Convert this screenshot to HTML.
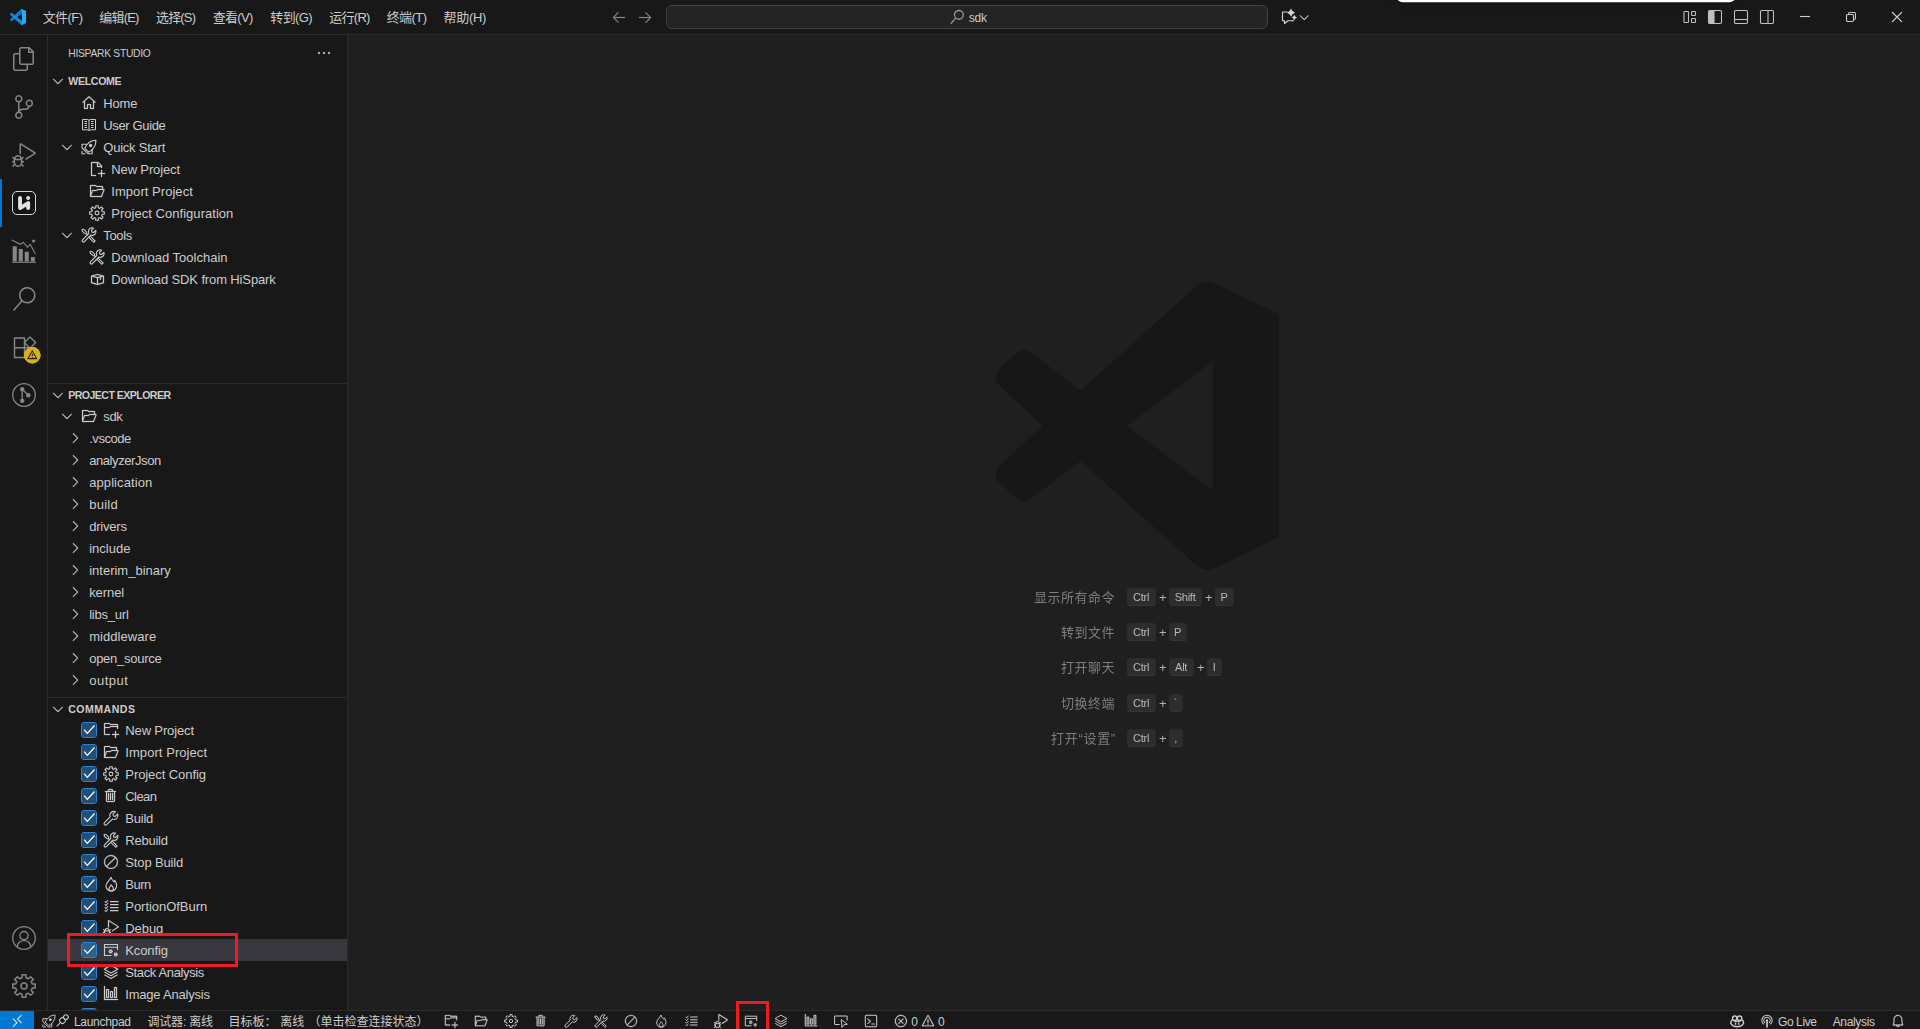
<!DOCTYPE html>
<html lang="zh-CN"><head><meta charset="utf-8"><title>sdk - Visual Studio Code</title><style>
html,body{margin:0;padding:0;background:#1f1f1f;}
body{width:1920px;height:1029px;position:relative;overflow:hidden;font-family:"Liberation Sans","Noto Sans CJK SC",sans-serif;}
.r{position:absolute;}
.t{position:absolute;white-space:pre;}
.g{will-change:transform;}
.ic{position:absolute;fill:none;stroke:currentColor;stroke-width:1.1;overflow:visible;}
.cb{position:absolute;width:16px;height:16px;box-sizing:border-box;border:1px solid #2a85d4;border-radius:3px;background:rgba(40,135,220,.5);background-clip:padding-box;}
.cb svg{position:absolute;left:0;top:0;}
.k{will-change:transform;position:absolute;height:18px;box-sizing:border-box;background:#2d2d2d;border:1px solid #2b2b2b;border-bottom-color:#363636;border-radius:3px;color:#b9b9b9;font-size:11px;line-height:16px;letter-spacing:-0.25px;text-indent:-0.5px;text-align:center;white-space:pre;}
</style></head><body>
<div class="r" style="left:0px;top:0px;width:1920px;height:1029px;background:#1f1f1f;"></div>
<div class="r" style="left:0px;top:0px;width:1920px;height:35px;background:#181818;border-bottom:1px solid #2b2b2b;box-sizing:border-box"></div>
<div class="r" style="left:0px;top:35px;width:48px;height:975px;background:#181818;border-right:1px solid #2b2b2b;box-sizing:border-box"></div>
<div class="r" style="left:48px;top:35px;width:300px;height:975px;background:#181818;border-right:1px solid #2b2b2b;box-sizing:border-box"></div>
<svg class="ic" style="left:10px;top:9px" width="16" height="16" viewBox="0 0 100 100"><g stroke="none"><path fill="#0c7ccb" d="M96.4614 10.7962L75.8569 0.875542C73.4719 -0.272773 70.6217 0.211611 68.75 2.08333L1.29858 63.5832C-0.515693 65.2373 -0.513607 68.0937 1.30308 69.7452L6.81272 74.7539C8.29793 76.1041 10.5347 76.2035 12.1338 74.9905L93.3609 13.3699C96.086 11.3026 100 13.2462 100 16.6667V16.4275C100 14.0265 98.6246 11.8378 96.4614 10.7962Z"/><path fill="#0d8ad9" d="M96.4614 89.2038L75.8569 99.1245C73.4719 100.273 70.6217 99.7884 68.75 97.9167L1.29858 36.4169C-0.515693 34.7627 -0.513607 31.9063 1.30308 30.2548L6.81272 25.2461C8.29793 23.8959 10.5347 23.7965 12.1338 25.0095L93.3609 86.6301C96.086 88.6974 100 86.7538 100 83.3334V83.5726C100 85.9735 98.6246 88.1622 96.4614 89.2038Z"/><path fill="#29a9f4" d="M75.8578 99.1263C73.4721 100.274 70.6219 99.7885 68.75 97.9166C71.0564 100.223 75 98.5895 75 95.3278V4.67213C75 1.41039 71.0564 -0.223106 68.75 2.08329C70.6219 0.211402 73.4721 -0.273666 75.8578 0.873633L96.4587 10.7807C98.6234 11.8217 100 14.0112 100 16.4132V83.5871C100 85.9891 98.6234 88.1786 96.4586 89.2196L75.8578 99.1263Z"/></g></svg>
<div class="t " style="left:42.7px;top:-0.5px;font-size:13px;line-height:35px;color:#cccccc;letter-spacing:-0.575px;">文件(F)</div>
<div class="t " style="left:99.3px;top:-0.5px;font-size:13px;line-height:35px;color:#cccccc;letter-spacing:-0.832px;">编辑(E)</div>
<div class="t " style="left:156px;top:-0.5px;font-size:13px;line-height:35px;color:#cccccc;letter-spacing:-0.832px;">选择(S)</div>
<div class="t " style="left:212.7px;top:-0.5px;font-size:13px;line-height:35px;color:#cccccc;letter-spacing:-0.682px;">查看(V)</div>
<div class="t " style="left:270.3px;top:-0.5px;font-size:13px;line-height:35px;color:#cccccc;letter-spacing:-0.593px;">转到(G)</div>
<div class="t " style="left:329.3px;top:-0.5px;font-size:13px;line-height:35px;color:#cccccc;letter-spacing:-0.737px;">运行(R)</div>
<div class="t " style="left:386.7px;top:-0.5px;font-size:13px;line-height:35px;color:#cccccc;letter-spacing:-0.575px;">终端(T)</div>
<div class="t " style="left:443.6px;top:-0.5px;font-size:13px;line-height:35px;color:#cccccc;letter-spacing:-0.337px;">帮助(H)</div>
<svg class="ic" style="left:610.7px;top:8.5px;color:#858585" width="16" height="16" viewBox="0 0 16 16"><path fill="currentColor" stroke="currentColor" stroke-width="0.25" fill-rule="evenodd" d="M7 3.093l-5 5V8.800l5 5 .707-.707-4.146-4.147H14v-1H3.560L7.708 3.800 7 3.093z"/></svg>
<svg class="ic" style="left:636.7px;top:8.5px;color:#858585" width="16" height="16" viewBox="0 0 16 16"><path fill="currentColor" stroke="currentColor" stroke-width="0.25" fill-rule="evenodd" d="M9 13.887l5-5V8.180l-5-5-.707.707 4.146 4.147H2v1h10.440L8.292 13.180l.707.707z"/></svg>
<div class="r" style="left:666px;top:5px;width:602px;height:24px;box-sizing:border-box;background:#242424;border:1px solid #414141;border-radius:6px"></div>
<svg class="ic" style="left:949.8px;top:10px;color:#b4b4b4" width="14" height="14" viewBox="0 0 24 24"><path fill="currentColor" stroke="currentColor" stroke-width="0.375" fill-rule="evenodd" d="M15.250 0a8.250 8.250 0 0 0-6.180 13.720L1 22.880l1.120 1 8.050-9.120A8.251 8.251 0 1 0 15.250.010V0zm0 15a6.750 6.750 0 1 1 0-13.500 6.750 6.750 0 0 1 0 13.500z"/></svg>
<div class="t " style="left:968.7px;top:5.8px;font-size:12px;line-height:24px;color:#cccccc;letter-spacing:-0.187px;">sdk</div>
<svg class="ic" style="left:1281px;top:9px;color:#d4d4d4" width="16" height="16" viewBox="0 0 16 16"><path d="M6.500 3H1.500v8.700h2v2.800l3.500-2.800h5.300V10.800" stroke-width="1.150" stroke-linejoin="round"/><path d="M10.00 -0.40Q10.90 2.80 14.10 3.70Q10.90 4.60 10.00 7.80Q9.10 4.60 5.90 3.70Q9.10 2.80 10.00 -0.40zM13.30 5.70Q13.92 7.88 16.10 8.50Q13.92 9.12 13.30 11.30Q12.68 9.12 10.50 8.50Q12.68 7.88 13.30 5.70z" fill="currentColor" stroke="none"/></svg>
<svg class="ic" style="left:1297.4px;top:9.9px;color:#ccc" width="14.4" height="14.4" viewBox="0 0 16 16"><path fill="currentColor" stroke="currentColor" stroke-width="0.25" fill-rule="evenodd" d="M7.976 10.072l4.357-4.357.62.618L8.284 11h-.618L3 6.333l.619-.618 4.357 4.357z"/></svg>
<svg class="ic" style="left:1681.5px;top:9px;color:#c0c0c0" width="16" height="16" viewBox="0 0 16 16"><rect x="2" y="2.500" width="4.500" height="11" rx=".8"/><rect x="9.500" y="2.500" width="4" height="4" rx=".8"/><rect x="9.500" y="9.500" width="4" height="4" rx=".8"/></svg>
<svg class="ic" style="left:1707px;top:9px;color:#c0c0c0" width="16" height="16" viewBox="0 0 16 16"><rect x="1.500" y="1.500" width="13" height="13" rx="1.200"/><path d="M2 2h5v12H2z" fill="currentColor" stroke="none"/><path d="M7 1.500v13"/></svg>
<svg class="ic" style="left:1733px;top:9px;color:#c0c0c0" width="16" height="16" viewBox="0 0 16 16"><rect x="1.500" y="1.500" width="13" height="13" rx="1.200"/><path d="M1.500 10.500h13"/></svg>
<svg class="ic" style="left:1759px;top:9px;color:#c0c0c0" width="16" height="16" viewBox="0 0 16 16"><rect x="1.500" y="1.500" width="13" height="13" rx="1.200"/><path d="M9 1.500v13"/></svg>
<svg class="ic" style="left:1800px;top:11px;color:#ccc" width="10" height="12" viewBox="0 0 10 12"><path d="M0 5.500h10"/></svg>
<svg class="ic" style="left:1846px;top:12px;color:#ccc" width="10" height="10" viewBox="0 0 10 10"><rect x=".5" y="2.500" width="7" height="7" rx="1.200"/><path d="M2.500 2.500V1.700c0-.7.500-1.200 1.200-1.200h4.600c.7 0 1.200.5 1.200 1.200v4.600c0 .7-.5 1.200-1.200 1.200h-.8"/></svg>
<svg class="ic" style="left:1892px;top:12px;color:#ccc" width="10" height="10" viewBox="0 0 10 10"><path d="M0 0l10 10M10 0 0 10"/></svg>
<svg class="ic" style="left:1380px;top:0;filter:drop-shadow(0 0 3px rgba(0,0,0,.35))" width="370" height="12" viewBox="0 0 370 12"><rect x="16.600" y="-10" width="338.900" height="12.350" rx="6" fill="#fff" stroke="none"/></svg>
<div class="r" style="left:0px;top:179px;width:2px;height:48px;background:#0078d4;"></div>
<svg class="ic" style="left:12px;top:47px;color:#868686" width="24" height="24" viewBox="0 0 24 24"><path fill="currentColor" stroke="none" fill-rule="evenodd" d="M17.500 0h-9L7 1.500V6H2.500L1 7.500v15.070L2.500 24h12.070L16 22.570V18h4.700l1.300-1.430V4.500L17.500 0zm0 2.120l2.380 2.380H17.500V2.120zm-3 20.380h-12v-15H7v9.070L8.500 18h6v4.500zm6-6h-12v-15H16V6h4.500v10.500z"/></svg>
<svg class="ic" style="left:12px;top:95px;color:#868686" width="24" height="24" viewBox="0 0 24 24"><path fill="currentColor" stroke="none" fill-rule="evenodd" d="M21.007 8.222A3.738 3.738 0 0 0 15.045 5.200a3.737 3.737 0 0 0 1.156 6.583 2.988 2.988 0 0 1-2.668 1.670h-2.990a4.456 4.456 0 0 0-2.989 1.165V7.400a3.737 3.737 0 1 0-1.494 0v9.117a3.776 3.776 0 1 0 1.816.099 2.990 2.990 0 0 1 2.668-1.667h2.990a4.484 4.484 0 0 0 4.223-3.039 3.736 3.736 0 0 0 3.250-3.687zM4.565 3.738a2.242 2.242 0 1 1 4.484 0 2.242 2.242 0 0 1-4.484 0zm4.484 16.441a2.242 2.242 0 1 1-4.484 0 2.242 2.242 0 0 1 4.484 0zm8.221-9.715a2.242 2.242 0 1 1 0-4.485 2.242 2.242 0 0 1 0 4.485z"/></svg>
<svg class="ic" style="left:12px;top:143px;color:#868686" width="24" height="24" viewBox="0 0 24 24"><path fill="currentColor" stroke="none" fill-rule="evenodd" d="M10.940 13.500l-1.320 1.320a3.730 3.730 0 0 0-7.240 0L1.060 13.500 0 14.560l1.720 1.720-.220.220V18H0v1.500h1.500v.080c.077.489.214.966.410 1.420L0 22.940 1.060 24l1.650-1.650A4.308 4.308 0 0 0 6 24a4.310 4.310 0 0 0 3.290-1.650L10.940 24 12 22.940 10.090 21c.198-.464.336-.951.410-1.450v-.100H12V18h-1.500v-1.500l-.220-.220L12 14.560l-1.060-1.060zM6 13.500a2.250 2.250 0 0 1 2.250 2.250h-4.500A2.250 2.250 0 0 1 6 13.500zm3 6a3.330 3.330 0 0 1-3 3 3.330 3.330 0 0 1-3-3v-2.250h6v2.250zm14.760-9.900v1.260L13.500 17.370V15.600l8.500-5.370L9 2v9.460a5.070 5.070 0 0 0-1.500-.720V.630L8.640 0l15.120 9.600z"/></svg>
<div class="r" style="left:12px;top:191px;width:24px;height:24px;box-sizing:border-box;border:1px solid #d7d7d7;border-radius:5px;background:#141414"></div>
<svg class="ic" style="left:12px;top:191px" width="24" height="24" viewBox="0 0 24 24"><path d="M8.050 7v10.100l8.100-5.050v5.050" fill="none" stroke="#e2e2e2" stroke-width="3.900" stroke-linecap="round" stroke-linejoin="round"/><circle cx="16.150" cy="7" r="1.950" fill="#e2e2e2" stroke="none"/></svg>
<svg class="ic" style="left:12px;top:239px;color:#868686" width="24" height="24" viewBox="0 0 24 24"><path d="M0 23.300h24" stroke-width="1.100"/><path d="M.700 7.200h4.100v15.300H.700zM6.700 9.900h4.100v12.600H6.700zM12.700 12.700h4.100v9.800h-4.100zM18.800 17.900h4.100v4.600h-4.100z" fill="currentColor" stroke="none"/><path d="M-.200 1.100l8.300 4.200 3.200-1.900 4.200 4.700 2.800-2.800 5.100 9.700" stroke-width="1.100"/><circle cx="21.600" cy="2" r="1.600" fill="currentColor" stroke="none"/></svg>
<svg class="ic" style="left:12px;top:287px;color:#868686" width="24" height="24" viewBox="0 0 24 24"><path fill="currentColor" stroke="none" fill-rule="evenodd" d="M15.250 0a8.250 8.250 0 0 0-6.180 13.720L1 22.880l1.120 1 8.050-9.120A8.251 8.251 0 1 0 15.250.010V0zm0 15a6.750 6.750 0 1 1 0-13.500 6.750 6.750 0 0 1 0 13.500z"/></svg>
<svg class="ic" style="left:12px;top:335px;color:#868686" width="24" height="24" viewBox="0 0 24 24"><path d="M2.500 3h10v9.700h-10zM2.500 12.700h10v9.800h-10zM12.500 12.700h9.800v9.800h-9.800zM18 2l5.600 5.600-5.600 5.600-5.600-5.600z" stroke-width="1.400" stroke-linejoin="round"/></svg>
<svg class="ic" style="left:23.950px;top:346.650px" width="16.500" height="16.500" viewBox="0 0 17 17"><circle cx="8.500" cy="8.500" r="8.500" fill="#e2c08d" stroke="none"/><circle cx="8.500" cy="8.500" r="8.500" fill="#d9b10e" stroke="none"/><path d="M8.500 3.800 13 12H4z" fill="none" stroke="#222" stroke-width="1.100" stroke-linejoin="round"/><path d="M8.500 6.800v2.700M8.500 10.300v.9" stroke="#222" stroke-width="1"/></svg>
<svg class="ic" style="left:12px;top:383px;color:#868686" width="24" height="24" viewBox="0 0 24 24"><circle cx="12" cy="12" r="11.300" stroke-width="1.300"/><circle cx="10.200" cy="6.200" r="2.200" fill="currentColor" stroke="none"/><circle cx="10.200" cy="17.800" r="2.200" fill="currentColor" stroke="none"/><circle cx="16.300" cy="12.300" r="2.200" fill="currentColor" stroke="none"/><path d="M10.200 6.200v11.600M10.200 6.200l6.100 6.100" stroke-width="1.300"/></svg>
<svg class="ic" style="left:12px;top:926px;color:#868686" width="24" height="24" viewBox="0 0 24 24"><circle cx="12" cy="12" r="11.300" stroke-width="1.300"/><circle cx="12" cy="9.600" r="4.100" stroke-width="1.300"/><path d="M5.300 20.600c.500-3.900 3.400-5.900 6.700-5.900s6.200 2 6.700 5.900" stroke-width="1.300"/></svg>
<svg class="ic" style="left:12px;top:974px;color:#868686" width="24" height="24" viewBox="0 0 24 24"><path stroke-width="1.500" d="M10.02 3.73 10.04 0.77 13.96 0.77 13.98 3.73 16.44 4.75 18.56 2.67 21.33 5.44 19.25 7.56 20.27 10.02 23.23 10.04 23.23 13.96 20.27 13.98 19.25 16.44 21.33 18.56 18.56 21.33 16.44 19.25 13.98 20.27 13.96 23.23 10.04 23.23 10.02 20.27 7.56 19.25 5.44 21.33 2.67 18.56 4.75 16.44 3.73 13.98 0.77 13.96 0.77 10.04 3.73 10.02 4.75 7.56 2.67 5.44 5.44 2.67 7.56 4.75z" stroke-linejoin="round"/><circle stroke-width="1.500" cx="12" cy="12" r="3.0"/></svg>
<div class="t " style="left:68.3px;top:36.3px;font-size:10.3px;line-height:35px;color:#cccccc;letter-spacing:-0.287px;">HISPARK STUDIO</div>
<svg class="ic" style="left:316px;top:45px;color:#cccccc" width="16" height="16" viewBox="0 0 16 16"><path fill="currentColor" stroke="currentColor" stroke-width="0.25" fill-rule="evenodd" d="M4 8a1 1 0 1 1-2 0 1 1 0 0 1 2 0zm5 0a1 1 0 1 1-2 0 1 1 0 0 1 2 0zm5 0a1 1 0 1 1-2 0 1 1 0 0 1 2 0z"/></svg>
<svg class="ic" style="left:50px;top:73px;color:#cccccc" width="16" height="16" viewBox="0 0 16 16"><path fill="currentColor" stroke="currentColor" stroke-width="0.25" fill-rule="evenodd" d="M7.976 10.072l4.357-4.357.62.618L8.284 11h-.618L3 6.333l.619-.618 4.357 4.357z"/></svg>
<div class="t " style="left:68.2px;top:70.3px;font-size:10.6px;line-height:22px;color:#cccccc;font-weight:700;letter-spacing:-0.308px;">WELCOME</div>
<div class="r" style="left:48px;top:383px;width:299px;height:1px;background:#2b2b2b;"></div>
<svg class="ic" style="left:50px;top:387px;color:#cccccc" width="16" height="16" viewBox="0 0 16 16"><path fill="currentColor" stroke="currentColor" stroke-width="0.25" fill-rule="evenodd" d="M7.976 10.072l4.357-4.357.62.618L8.284 11h-.618L3 6.333l.619-.618 4.357 4.357z"/></svg>
<div class="t " style="left:68.2px;top:384.3px;font-size:10.6px;line-height:22px;color:#cccccc;font-weight:700;letter-spacing:-0.555px;">PROJECT EXPLORER</div>
<div class="r" style="left:48px;top:697px;width:299px;height:1px;background:#2b2b2b;"></div>
<svg class="ic" style="left:50px;top:701px;color:#cccccc" width="16" height="16" viewBox="0 0 16 16"><path fill="currentColor" stroke="currentColor" stroke-width="0.25" fill-rule="evenodd" d="M7.976 10.072l4.357-4.357.62.618L8.284 11h-.618L3 6.333l.619-.618 4.357 4.357z"/></svg>
<div class="t " style="left:68.2px;top:698.3px;font-size:10.6px;line-height:22px;color:#cccccc;font-weight:700;letter-spacing:0.458px;">COMMANDS</div>
<svg class="ic" style="left:81px;top:95px;color:#cccccc" width="16" height="16" viewBox="0 0 16 16"><path fill="currentColor" stroke="currentColor" stroke-width="0.25" fill-rule="evenodd" d="M8.360 1.370l6.360 5.800-.710.710L13 6.964v6.526l-.500.500h-3l-.500-.500v-3.500H7v3.500l-.500.500h-3l-.500-.500V6.972L2 7.880l-.710-.710 6.350-5.800h.720zM4 6.063v6.927h2v-3.500l.500-.500h3l.500.500v3.500h2V6.057L8 2.430 4 6.063z"/></svg>
<div class="t " style="left:103.3px;top:92.8px;font-size:13px;line-height:22px;color:#cccccc;letter-spacing:-0.159px;">Home</div>
<svg class="ic" style="left:81px;top:117px;color:#cccccc" width="16" height="16" viewBox="0 0 16 16"><path d="M1.500 2.500h5.300c.700 0 1.200.500 1.200 1.200 0-.700.500-1.200 1.200-1.200h5.300v10.300H9.200c-.700 0-1.200.400-1.200 1 0-.600-.500-1-1.200-1H1.500zM8 3.700v10.100M3.500 4.500h2.500M3.500 6.500h2.500M3.500 8.500h2.500M3.500 10.500h2.500M10 4.500h2.500M10 6.500h2.500M10 8.500h2.500M10 10.500h2.500" stroke-width="1"/></svg>
<div class="t " style="left:103.3px;top:114.8px;font-size:13px;line-height:22px;color:#cccccc;letter-spacing:-0.361px;">User Guide</div>
<svg class="ic" style="left:59px;top:139px;color:#cccccc" width="16" height="16" viewBox="0 0 16 16"><path fill="currentColor" stroke="currentColor" stroke-width="0.25" fill-rule="evenodd" d="M7.976 10.072l4.357-4.357.62.618L8.284 11h-.618L3 6.333l.619-.618 4.357 4.357z"/></svg>
<svg class="ic" style="left:81px;top:139px;color:#cccccc" width="16" height="16" viewBox="0 0 16 16"><path d="M15 1.300C10.200 1.300 6.200 4 3.700 9.200l4 4C12.600 10.500 15 6.500 15 1.300zM5.700 5.300H1V9l6 5.700h4.200v-4.200M1 12v2.700h3.300" stroke-linejoin="round"/><circle cx="9.600" cy="6.500" r="1.100" fill="currentColor"/></svg>
<div class="t " style="left:103.3px;top:136.8px;font-size:13px;line-height:22px;color:#cccccc;letter-spacing:-0.230px;">Quick Start</div>
<svg class="ic" style="left:89px;top:161px;color:#cccccc" width="16" height="16" viewBox="0 0 16 16"><path fill="currentColor" stroke="currentColor" stroke-width="0.25" fill-rule="evenodd" d="M9.5 1.1l3.400 3.500.1.400v2h-1V6H8V2H3v12h4v1H2.500l-.500-.500v-13l.500-.500h6.700l.300.100zM9 2v3h2.900L9 2zm4 14h-1v-3H9v-1h3V9h1v3h3v1h-3v3z"/></svg>
<div class="t " style="left:111.3px;top:158.8px;font-size:13px;line-height:22px;color:#cccccc;letter-spacing:-0.138px;">New Project</div>
<svg class="ic" style="left:89px;top:183px;color:#cccccc" width="16" height="16" viewBox="0 0 16 16"><path fill="currentColor" stroke="currentColor" stroke-width="0.25" fill-rule="evenodd" d="M1.500 14h11l.480-.370 2.630-7-.480-.630H14V3.500l-.500-.500H7.710l-.860-.850L6.500 2h-5l-.500.500v11l.500.500zM2 3h4.290l.860.850.350.150H13v2H8.500l-.350.150-.860.850H3.500l-.470.340-1 3.080L2 3zm10.130 10H2.190l1.670-5H7.500l.350-.150.860-.850h5.790l-2.370 6z"/></svg>
<div class="t " style="left:111.3px;top:180.8px;font-size:13px;line-height:22px;color:#cccccc;letter-spacing:0.045px;">Import Project</div>
<svg class="ic" style="left:89px;top:205px;color:#cccccc" width="16" height="16" viewBox="0 0 16 16"><path d="M6.74 2.75 6.73 0.71 9.27 0.71 9.26 2.75 10.82 3.40 12.26 1.95 14.05 3.74 12.60 5.18 13.25 6.74 15.29 6.73 15.29 9.27 13.25 9.26 12.60 10.82 14.05 12.26 12.26 14.05 10.82 12.60 9.26 13.25 9.27 15.29 6.73 15.29 6.74 13.25 5.18 12.60 3.74 14.05 1.95 12.26 3.40 10.82 2.75 9.26 0.71 9.27 0.71 6.73 2.75 6.74 3.40 5.18 1.95 3.74 3.74 1.95 5.18 3.40z" stroke-linejoin="round"/><circle cx="8" cy="8" r="1.9"/></svg>
<div class="t " style="left:111.3px;top:202.8px;font-size:13px;line-height:22px;color:#cccccc;letter-spacing:0.030px;">Project Configuration</div>
<svg class="ic" style="left:59px;top:227px;color:#cccccc" width="16" height="16" viewBox="0 0 16 16"><path fill="currentColor" stroke="currentColor" stroke-width="0.25" fill-rule="evenodd" d="M7.976 10.072l4.357-4.357.62.618L8.284 11h-.618L3 6.333l.619-.618 4.357 4.357z"/></svg>
<svg class="ic" style="left:81px;top:227px;color:#cccccc" width="16" height="16" viewBox="0 0 16 16"><path d="M11.2 .9a3.700 3.700 0 0 1 1.500.300L10.500 3.400l.400 1.700 1.700.400 2.200-2.200a3.700 3.700 0 0 1-4.900 4.700L3.400 14.700a1.300 1.300 0 0 1-1.900-1.900l6.300-6.500A3.700 3.700 0 0 1 11.200.900z" stroke-linejoin="round"/><ellipse cx="3.400" cy="4.600" rx="3" ry="1.250" transform="rotate(45 3.400 4.600)"/><path d="M9.300 9.200l4.800 4.800-1.300 1.300-4.700-4.700M5.600 6.800 7 8.200"/></svg>
<div class="t " style="left:103.3px;top:224.8px;font-size:13px;line-height:22px;color:#cccccc;letter-spacing:-0.362px;">Tools</div>
<svg class="ic" style="left:89px;top:249px;color:#cccccc" width="16" height="16" viewBox="0 0 16 16"><path d="M11.2 .9a3.700 3.700 0 0 1 1.500.300L10.500 3.400l.400 1.700 1.700.400 2.200-2.200a3.700 3.700 0 0 1-4.900 4.700L3.400 14.700a1.300 1.300 0 0 1-1.900-1.900l6.300-6.500A3.700 3.700 0 0 1 11.200.900z" stroke-linejoin="round"/><ellipse cx="3.400" cy="4.600" rx="3" ry="1.250" transform="rotate(45 3.400 4.600)"/><path d="M9.300 9.200l4.800 4.800-1.300 1.300-4.700-4.700M5.600 6.800 7 8.200"/></svg>
<div class="t " style="left:111.3px;top:246.8px;font-size:13px;line-height:22px;color:#cccccc;letter-spacing:0.005px;">Download Toolchain</div>
<svg class="ic" style="left:89px;top:271px;color:#cccccc" width="16" height="16" viewBox="0 0 16 16"><path fill="currentColor" stroke="currentColor" stroke-width="0.25" fill-rule="evenodd" d="M8.610 3l5.740 1.530L15 5v6.740l-.370.480-6.130 1.690-6.140-1.690-.360-.480V5l.610-.470L8.340 3h.270zm-.090 1l-4 1 .550.200 3.430.900 3-.810.950-.290-3.930-1zM3 11.360l5 1.370V7L3 5.660v5.700zM9 7v5.730l5-1.370V5.630l-2.020.553V8.750l-1 .260V6.450L9 7z"/></svg>
<div class="t " style="left:111.3px;top:268.8px;font-size:13px;line-height:22px;color:#cccccc;letter-spacing:-0.130px;">Download SDK from HiSpark</div>
<svg class="ic" style="left:59px;top:408px;color:#cccccc" width="16" height="16" viewBox="0 0 16 16"><path fill="currentColor" stroke="currentColor" stroke-width="0.25" fill-rule="evenodd" d="M7.976 10.072l4.357-4.357.62.618L8.284 11h-.618L3 6.333l.619-.618 4.357 4.357z"/></svg>
<svg class="ic" style="left:81px;top:408px;color:#cccccc" width="16" height="16" viewBox="0 0 16 16"><path fill="currentColor" stroke="currentColor" stroke-width="0.25" fill-rule="evenodd" d="M1.500 14h11l.480-.370 2.630-7-.480-.630H14V3.500l-.500-.500H7.710l-.860-.850L6.500 2h-5l-.500.500v11l.500.500zM2 3h4.290l.860.850.350.150H13v2H8.500l-.350.150-.860.850H3.500l-.470.340-1 3.080L2 3zm10.130 10H2.190l1.670-5H7.500l.350-.150.860-.850h5.790l-2.370 6z"/></svg>
<div class="t " style="left:103.3px;top:405.8px;font-size:13px;line-height:22px;color:#cccccc;letter-spacing:-0.365px;">sdk</div>
<svg class="ic" style="left:67px;top:430px;color:#cccccc" width="16" height="16" viewBox="0 0 16 16"><path fill="currentColor" stroke="currentColor" stroke-width="0.25" fill-rule="evenodd" d="M10.072 8.024L5.715 3.667l.618-.62L11 7.716v.618L6.333 13l-.618-.619 4.357-4.357z"/></svg>
<div class="t " style="left:89.2px;top:427.8px;font-size:13px;line-height:22px;color:#cccccc;letter-spacing:-0.450px;">.vscode</div>
<svg class="ic" style="left:67px;top:452px;color:#cccccc" width="16" height="16" viewBox="0 0 16 16"><path fill="currentColor" stroke="currentColor" stroke-width="0.25" fill-rule="evenodd" d="M10.072 8.024L5.715 3.667l.618-.62L11 7.716v.618L6.333 13l-.618-.619 4.357-4.357z"/></svg>
<div class="t " style="left:89.2px;top:449.8px;font-size:13px;line-height:22px;color:#cccccc;letter-spacing:-0.418px;">analyzerJson</div>
<svg class="ic" style="left:67px;top:474px;color:#cccccc" width="16" height="16" viewBox="0 0 16 16"><path fill="currentColor" stroke="currentColor" stroke-width="0.25" fill-rule="evenodd" d="M10.072 8.024L5.715 3.667l.618-.62L11 7.716v.618L6.333 13l-.618-.619 4.357-4.357z"/></svg>
<div class="t " style="left:89.2px;top:471.8px;font-size:13px;line-height:22px;color:#cccccc;letter-spacing:0.084px;">application</div>
<svg class="ic" style="left:67px;top:496px;color:#cccccc" width="16" height="16" viewBox="0 0 16 16"><path fill="currentColor" stroke="currentColor" stroke-width="0.25" fill-rule="evenodd" d="M10.072 8.024L5.715 3.667l.618-.62L11 7.716v.618L6.333 13l-.618-.619 4.357-4.357z"/></svg>
<div class="t " style="left:89.2px;top:493.8px;font-size:13px;line-height:22px;color:#cccccc;letter-spacing:0.258px;">build</div>
<svg class="ic" style="left:67px;top:518px;color:#cccccc" width="16" height="16" viewBox="0 0 16 16"><path fill="currentColor" stroke="currentColor" stroke-width="0.25" fill-rule="evenodd" d="M10.072 8.024L5.715 3.667l.618-.62L11 7.716v.618L6.333 13l-.618-.619 4.357-4.357z"/></svg>
<div class="t " style="left:89.2px;top:515.8px;font-size:13px;line-height:22px;color:#cccccc;letter-spacing:-0.201px;">drivers</div>
<svg class="ic" style="left:67px;top:540px;color:#cccccc" width="16" height="16" viewBox="0 0 16 16"><path fill="currentColor" stroke="currentColor" stroke-width="0.25" fill-rule="evenodd" d="M10.072 8.024L5.715 3.667l.618-.62L11 7.716v.618L6.333 13l-.618-.619 4.357-4.357z"/></svg>
<div class="t " style="left:89.2px;top:537.8px;font-size:13px;line-height:22px;color:#cccccc;letter-spacing:0.017px;">include</div>
<svg class="ic" style="left:67px;top:562px;color:#cccccc" width="16" height="16" viewBox="0 0 16 16"><path fill="currentColor" stroke="currentColor" stroke-width="0.25" fill-rule="evenodd" d="M10.072 8.024L5.715 3.667l.618-.62L11 7.716v.618L6.333 13l-.618-.619 4.357-4.357z"/></svg>
<div class="t " style="left:89.2px;top:559.8px;font-size:13px;line-height:22px;color:#cccccc;letter-spacing:-0.003px;">interim_binary</div>
<svg class="ic" style="left:67px;top:584px;color:#cccccc" width="16" height="16" viewBox="0 0 16 16"><path fill="currentColor" stroke="currentColor" stroke-width="0.25" fill-rule="evenodd" d="M10.072 8.024L5.715 3.667l.618-.62L11 7.716v.618L6.333 13l-.618-.619 4.357-4.357z"/></svg>
<div class="t " style="left:89.2px;top:581.8px;font-size:13px;line-height:22px;color:#cccccc;letter-spacing:-0.082px;">kernel</div>
<svg class="ic" style="left:67px;top:606px;color:#cccccc" width="16" height="16" viewBox="0 0 16 16"><path fill="currentColor" stroke="currentColor" stroke-width="0.25" fill-rule="evenodd" d="M10.072 8.024L5.715 3.667l.618-.62L11 7.716v.618L6.333 13l-.618-.619 4.357-4.357z"/></svg>
<div class="t " style="left:89.2px;top:603.8px;font-size:13px;line-height:22px;color:#cccccc;letter-spacing:-0.226px;">libs_url</div>
<svg class="ic" style="left:67px;top:628px;color:#cccccc" width="16" height="16" viewBox="0 0 16 16"><path fill="currentColor" stroke="currentColor" stroke-width="0.25" fill-rule="evenodd" d="M10.072 8.024L5.715 3.667l.618-.62L11 7.716v.618L6.333 13l-.618-.619 4.357-4.357z"/></svg>
<div class="t " style="left:89.2px;top:625.8px;font-size:13px;line-height:22px;color:#cccccc;letter-spacing:0.059px;">middleware</div>
<svg class="ic" style="left:67px;top:650px;color:#cccccc" width="16" height="16" viewBox="0 0 16 16"><path fill="currentColor" stroke="currentColor" stroke-width="0.25" fill-rule="evenodd" d="M10.072 8.024L5.715 3.667l.618-.62L11 7.716v.618L6.333 13l-.618-.619 4.357-4.357z"/></svg>
<div class="t " style="left:89.2px;top:647.8px;font-size:13px;line-height:22px;color:#cccccc;letter-spacing:-0.267px;">open_source</div>
<svg class="ic" style="left:67px;top:672px;color:#cccccc" width="16" height="16" viewBox="0 0 16 16"><path fill="currentColor" stroke="currentColor" stroke-width="0.25" fill-rule="evenodd" d="M10.072 8.024L5.715 3.667l.618-.62L11 7.716v.618L6.333 13l-.618-.619 4.357-4.357z"/></svg>
<div class="t " style="left:89.2px;top:669.8px;font-size:13px;line-height:22px;color:#cccccc;letter-spacing:0.491px;">output</div>
<div class="cb" style="left:81px;top:722px"><svg width="14" height="14" viewBox="0 0 14 14"><path d="M2.200 6.600 5.300 10.400 12.500 2.500" fill="none" stroke="#fff" stroke-width="1.250"/></svg></div>
<svg class="ic" style="left:103px;top:722px;color:#cccccc" width="16" height="16" viewBox="0 0 16 16"><path fill="currentColor" stroke="currentColor" stroke-width="0.25" fill-rule="evenodd" d="M14.500 2H7.710l-.850-.850L6.510 1h-5l-.500.500v11l.500.500H7v-1H1.990V6h4.490l.350-.150.860-.860H14v1.500l-.001.510h1.011V2.500L14.500 2zm-.510 2h-6.500l-.350.150-.860.860H2v-3h4.290l.850.850.360.150H14l-.010.990zM13 16h-1v-3H9v-1h3V9h1v3h3v1h-3v3z"/></svg>
<div class="t " style="left:125.3px;top:719.8px;font-size:13px;line-height:22px;color:#cccccc;letter-spacing:-0.138px;">New Project</div>
<div class="cb" style="left:81px;top:744px"><svg width="14" height="14" viewBox="0 0 14 14"><path d="M2.200 6.600 5.300 10.400 12.500 2.500" fill="none" stroke="#fff" stroke-width="1.250"/></svg></div>
<svg class="ic" style="left:103px;top:744px;color:#cccccc" width="16" height="16" viewBox="0 0 16 16"><path fill="currentColor" stroke="currentColor" stroke-width="0.25" fill-rule="evenodd" d="M1.500 14h11l.480-.370 2.630-7-.480-.630H14V3.500l-.500-.500H7.710l-.860-.850L6.500 2h-5l-.500.500v11l.500.500zM2 3h4.290l.860.850.350.150H13v2H8.500l-.350.150-.860.850H3.500l-.470.340-1 3.080L2 3zm10.130 10H2.190l1.670-5H7.500l.350-.150.860-.850h5.790l-2.370 6z"/></svg>
<div class="t " style="left:125.3px;top:741.8px;font-size:13px;line-height:22px;color:#cccccc;letter-spacing:0.060px;">Import Project</div>
<div class="cb" style="left:81px;top:766px"><svg width="14" height="14" viewBox="0 0 14 14"><path d="M2.200 6.600 5.300 10.400 12.500 2.500" fill="none" stroke="#fff" stroke-width="1.250"/></svg></div>
<svg class="ic" style="left:103px;top:766px;color:#cccccc" width="16" height="16" viewBox="0 0 16 16"><path d="M6.74 2.75 6.73 0.71 9.27 0.71 9.26 2.75 10.82 3.40 12.26 1.95 14.05 3.74 12.60 5.18 13.25 6.74 15.29 6.73 15.29 9.27 13.25 9.26 12.60 10.82 14.05 12.26 12.26 14.05 10.82 12.60 9.26 13.25 9.27 15.29 6.73 15.29 6.74 13.25 5.18 12.60 3.74 14.05 1.95 12.26 3.40 10.82 2.75 9.26 0.71 9.27 0.71 6.73 2.75 6.74 3.40 5.18 1.95 3.74 3.74 1.95 5.18 3.40z" stroke-linejoin="round"/><circle cx="8" cy="8" r="1.9"/></svg>
<div class="t " style="left:125.3px;top:763.8px;font-size:13px;line-height:22px;color:#cccccc;letter-spacing:-0.073px;">Project Config</div>
<div class="cb" style="left:81px;top:788px"><svg width="14" height="14" viewBox="0 0 14 14"><path d="M2.200 6.600 5.300 10.400 12.500 2.500" fill="none" stroke="#fff" stroke-width="1.250"/></svg></div>
<svg class="ic" style="left:103px;top:788px;color:#cccccc" width="16" height="16" viewBox="0 0 16 16"><path fill="currentColor" stroke="currentColor" stroke-width="0.25" fill-rule="evenodd" d="M10 3h3v1h-1v9l-1 1H4l-1-1V4H2V3h3V2a1 1 0 0 1 1-1h3a1 1 0 0 1 1 1v1zM9 2H6v1h3V2zM4 13h7V4H4v9zm2-8H5v7h1V5zm1 0h1v7H7V5zm2 0h1v7H9V5z"/></svg>
<div class="t " style="left:125.3px;top:785.8px;font-size:13px;line-height:22px;color:#cccccc;letter-spacing:-0.567px;">Clean</div>
<div class="cb" style="left:81px;top:810px"><svg width="14" height="14" viewBox="0 0 14 14"><path d="M2.200 6.600 5.300 10.400 12.500 2.500" fill="none" stroke="#fff" stroke-width="1.250"/></svg></div>
<svg class="ic" style="left:103px;top:810px;color:#cccccc" width="16" height="16" viewBox="0 0 16 16"><path d="M10.8 1.4a4 4 0 0 1 1.6.3L10 4.1l.4 1.9 1.900.400 2.400-2.400a4 4 0 0 1-5.300 5.100L3.600 14.700a1.450 1.450 0 0 1-2.100-2.100l5.600-5.700a4 4 0 0 1 3.700-5.500z" stroke-linejoin="round"/></svg>
<div class="t " style="left:125.3px;top:807.8px;font-size:13px;line-height:22px;color:#cccccc;letter-spacing:-0.227px;">Build</div>
<div class="cb" style="left:81px;top:832px"><svg width="14" height="14" viewBox="0 0 14 14"><path d="M2.200 6.600 5.300 10.400 12.500 2.500" fill="none" stroke="#fff" stroke-width="1.250"/></svg></div>
<svg class="ic" style="left:103px;top:832px;color:#cccccc" width="16" height="16" viewBox="0 0 16 16"><path d="M11.2 .9a3.700 3.700 0 0 1 1.500.300L10.500 3.400l.400 1.700 1.700.400 2.200-2.200a3.700 3.700 0 0 1-4.900 4.700L3.400 14.700a1.300 1.300 0 0 1-1.900-1.900l6.300-6.500A3.700 3.700 0 0 1 11.200.900z" stroke-linejoin="round"/><ellipse cx="3.400" cy="4.600" rx="3" ry="1.250" transform="rotate(45 3.400 4.600)"/><path d="M9.300 9.200l4.800 4.800-1.300 1.300-4.700-4.700M5.600 6.800 7 8.200"/></svg>
<div class="t " style="left:125.3px;top:829.8px;font-size:13px;line-height:22px;color:#cccccc;letter-spacing:-0.231px;">Rebuild</div>
<div class="cb" style="left:81px;top:854px"><svg width="14" height="14" viewBox="0 0 14 14"><path d="M2.200 6.600 5.300 10.400 12.500 2.500" fill="none" stroke="#fff" stroke-width="1.250"/></svg></div>
<svg class="ic" style="left:103px;top:854px;color:#cccccc" width="16" height="16" viewBox="0 0 16 16"><path fill="currentColor" stroke="currentColor" stroke-width="0.25" fill-rule="evenodd" d="M8 1a7 7 0 1 1-7 7 7.010 7.010 0 0 1 7-7zM2 8c0 1.418.504 2.790 1.423 3.870l8.447-8.447A5.993 5.993 0 0 0 2 8zm12 0c0-1.418-.504-2.790-1.423-3.870L4.130 12.577A5.993 5.993 0 0 0 14 8z"/></svg>
<div class="t " style="left:125.3px;top:851.8px;font-size:13px;line-height:22px;color:#cccccc;letter-spacing:-0.140px;">Stop Build</div>
<div class="cb" style="left:81px;top:876px"><svg width="14" height="14" viewBox="0 0 14 14"><path d="M2.200 6.600 5.300 10.400 12.500 2.500" fill="none" stroke="#fff" stroke-width="1.250"/></svg></div>
<svg class="ic" style="left:103px;top:876px;color:#cccccc" width="16" height="16" viewBox="0 0 16 16"><path d="M8.100 1.200C8.300 3.300 10 4.500 11.100 6c.400-.500.600-1.100.600-1.700 1.300 1.600 1.900 3.600 1.900 5.500a5.300 5.300 0 0 1-5.300 5.200A5.200 5.200 0 0 1 3 9.800c0-3.300 3.600-5.200 5.100-8.600z" stroke-linejoin="round"/><path d="M8.200 14.900c-1.400 0-2.200-1-2.200-2 0-1.600 1.400-2.400 2-4.100 1.200 1.400 2.400 2.400 2.400 4.100 0 1-.800 2-2.200 2z" stroke-linejoin="round"/></svg>
<div class="t " style="left:125.3px;top:873.8px;font-size:13px;line-height:22px;color:#cccccc;letter-spacing:-0.487px;">Burn</div>
<div class="cb" style="left:81px;top:898px"><svg width="14" height="14" viewBox="0 0 14 14"><path d="M2.200 6.600 5.300 10.400 12.500 2.500" fill="none" stroke="#fff" stroke-width="1.250"/></svg></div>
<svg class="ic" style="left:103px;top:898px;color:#cccccc" width="16" height="16" viewBox="0 0 16 16"><path d="M7 3.500h8.500M7 6.500h8.500M7 9.500h8.500M7 12.500h8.500" stroke-width="1.250"/><path d="M1.700 3.300l1.200 1.200 2.200-2.500M1.700 6.300l1.200 1.200 2.200-2.500M1.700 9.300l1.200 1.200 2.200-2.500M1.700 12.300l1.200 1.200 2.200-2.500"/></svg>
<div class="t " style="left:125.3px;top:895.8px;font-size:13px;line-height:22px;color:#cccccc;letter-spacing:-0.040px;">PortionOfBurn</div>
<div class="cb" style="left:81px;top:920px"><svg width="14" height="14" viewBox="0 0 14 14"><path d="M2.200 6.600 5.300 10.400 12.500 2.500" fill="none" stroke="#fff" stroke-width="1.250"/></svg></div>
<svg class="ic" style="left:103px;top:920px;color:#cccccc" width="16" height="16" viewBox="0 0 24 24"><path fill="currentColor" stroke="currentColor" stroke-width=".35" fill-rule="evenodd" d="M10.940 13.500l-1.320 1.320a3.730 3.730 0 0 0-7.240 0L1.060 13.500 0 14.560l1.720 1.720-.220.220V18H0v1.500h1.500v.080c.077.489.214.966.410 1.420L0 22.940 1.060 24l1.650-1.650A4.308 4.308 0 0 0 6 24a4.310 4.310 0 0 0 3.290-1.650L10.940 24 12 22.940 10.090 21c.198-.464.336-.951.410-1.450v-.100H12V18h-1.500v-1.500l-.220-.220L12 14.560l-1.060-1.060zM6 13.500a2.250 2.250 0 0 1 2.250 2.250h-4.500A2.250 2.250 0 0 1 6 13.500zm3 6a3.330 3.330 0 0 1-3 3 3.330 3.330 0 0 1-3-3v-2.250h6v2.250zm14.760-9.900v1.260L13.500 17.370V15.600l8.500-5.370L9 2v9.460a5.070 5.070 0 0 0-1.500-.720V.630L8.640 0l15.120 9.600z"/></svg>
<div class="t " style="left:125.3px;top:917.8px;font-size:13px;line-height:22px;color:#cccccc;letter-spacing:-0.077px;">Debug</div>
<div class="r" style="left:48px;top:939px;width:299px;height:22px;background:#37373d;"></div>
<div class="cb" style="left:81px;top:942px"><svg width="14" height="14" viewBox="0 0 14 14"><path d="M2.200 6.600 5.300 10.400 12.500 2.500" fill="none" stroke="#fff" stroke-width="1.250"/></svg></div>
<svg class="ic" style="left:103px;top:942px;color:#cccccc" width="16" height="16" viewBox="0 0 16 16"><path d="M14.500 8V2.500h-13v11H8.500M1.500 5.200h13"/><g stroke-width="1.05"><circle cx="7.7" cy="9.4" r="1.0"/><path d="M8.70 9.40L9.90 9.40M8.41 10.11L9.26 10.96M7.70 10.40L7.70 11.60M6.99 10.11L6.14 10.96M6.70 9.40L5.50 9.40M6.99 8.69L6.14 7.84M7.70 8.40L7.70 7.20M8.41 8.69L9.26 7.84"/><circle cx="12.8" cy="12.4" r="0.9"/><path d="M13.70 12.40L14.80 12.40M13.44 13.04L14.21 13.81M12.80 13.30L12.80 14.40M12.16 13.04L11.39 13.81M11.90 12.40L10.80 12.40M12.16 11.76L11.39 10.99M12.80 11.50L12.80 10.40M13.44 11.76L14.21 10.99"/></g></svg>
<div class="t " style="left:125.3px;top:939.8px;font-size:13px;line-height:22px;color:#cccccc;letter-spacing:-0.110px;">Kconfig</div>
<div class="cb" style="left:81px;top:964px"><svg width="14" height="14" viewBox="0 0 14 14"><path d="M2.200 6.600 5.300 10.400 12.500 2.500" fill="none" stroke="#fff" stroke-width="1.250"/></svg></div>
<svg class="ic" style="left:103px;top:964px;color:#cccccc" width="16" height="16" viewBox="0 0 16 16"><path d="M8 1.300 14.800 5.200 8 9.100 1.200 5.200zM1.500 8 8 11.700 14.500 8M1.500 10.800 8 14.500 14.500 10.800" stroke-linejoin="round"/></svg>
<div class="t " style="left:125.3px;top:961.8px;font-size:13px;line-height:22px;color:#cccccc;letter-spacing:-0.370px;">Stack Analysis</div>
<div class="cb" style="left:81px;top:986px"><svg width="14" height="14" viewBox="0 0 14 14"><path d="M2.200 6.600 5.300 10.400 12.500 2.500" fill="none" stroke="#fff" stroke-width="1.250"/></svg></div>
<svg class="ic" style="left:103px;top:986px;color:#cccccc" width="16" height="16" viewBox="0 0 16 16"><path fill="currentColor" stroke="currentColor" stroke-width="0.25" fill-rule="evenodd" d="M1.500 14H15v-1H2V0H1v13.500l.500.500zM3 11.500v-8l.500-.500h2l.500.500v8l-.500.500h-2l-.500-.500zm2-.500V4H4v7h1zm6-9.500v10l.500.500h2l.500-.500v-10l-.500-.500h-2l-.500.500zm2 .500v9h-1V2h1zm-6 9.500v-6l.500-.500h2l.500.500v6l-.500.500h-2l-.500-.500zm2-.500V6H8v5h1z"/></svg>
<div class="t " style="left:125.3px;top:983.8px;font-size:13px;line-height:22px;color:#cccccc;letter-spacing:-0.210px;">Image Analysis</div>
<div class="cb" style="left:81px;top:1008px"><svg width="14" height="14" viewBox="0 0 14 14"><path d="M2.200 6.600 5.300 10.400 12.500 2.500" fill="none" stroke="#fff" stroke-width="1.250"/></svg></div>
<div class="r" style="left:67px;top:933px;width:171px;height:34px;box-sizing:border-box;border:3px solid #ed1c24"></div>
<svg class="ic" style="left:0;top:0" width="1920" height="1029" viewBox="0 0 1920 1029"><path fill="#171717" stroke="none" fill-rule="evenodd" d="M1196.90 285.70A16.00 16.00 0 0 1 1214.58 283.19L1279.00 314.40L1279.00 537.00L1214.58 568.21A16.00 16.00 0 0 1 1196.90 565.70L1080.60 461.00L1030.58 498.97A11.00 11.00 0 0 1 1016.53 498.35L999.21 482.60A11.00 11.00 0 0 1 999.07 466.45L1042.40 425.70L999.07 384.95A11.00 11.00 0 0 1 999.21 368.80L1016.53 353.05A11.00 11.00 0 0 1 1030.58 352.43L1080.60 390.40ZM1212.7 361L1212.7 490.6L1127.2 425.7Z"/></svg>
<div class="t g" style="left:1034.4px;top:586.8px;font-size:13px;line-height:22px;color:#7e7e7e;letter-spacing:0.500px;">显示所有命令</div>
<div class="k" style="left:1127.2px;top:588px;width:28.59999999999991px">Ctrl</div>
<div class="t g" style="left:1158.7px;top:586.9px;font-size:13px;line-height:22px;color:#b0b0b0;">+</div>
<div class="k" style="left:1169.2px;top:588px;width:32.700000000000045px">Shift</div>
<div class="t g" style="left:1205.2px;top:586.9px;font-size:13px;line-height:22px;color:#b0b0b0;">+</div>
<div class="k" style="left:1215.2px;top:588px;width:18.700000000000045px">P</div>
<div class="t g" style="left:1061.4px;top:621.8px;font-size:13px;line-height:22px;color:#7e7e7e;letter-spacing:0.500px;">转到文件</div>
<div class="k" style="left:1127.2px;top:623px;width:28.59999999999991px">Ctrl</div>
<div class="t g" style="left:1158.7px;top:621.9px;font-size:13px;line-height:22px;color:#b0b0b0;">+</div>
<div class="k" style="left:1169.2px;top:623px;width:17.59999999999991px">P</div>
<div class="t g" style="left:1061.4px;top:656.8px;font-size:13px;line-height:22px;color:#7e7e7e;letter-spacing:0.500px;">打开聊天</div>
<div class="k" style="left:1127.2px;top:658px;width:28.59999999999991px">Ctrl</div>
<div class="t g" style="left:1158.7px;top:656.9px;font-size:13px;line-height:22px;color:#b0b0b0;">+</div>
<div class="k" style="left:1169.2px;top:658px;width:24.700000000000045px">Alt</div>
<div class="t g" style="left:1196.7px;top:656.9px;font-size:13px;line-height:22px;color:#b0b0b0;">+</div>
<div class="k" style="left:1207.1px;top:658px;width:14.800000000000182px">I</div>
<div class="t g" style="left:1061.4px;top:692.8px;font-size:13px;line-height:22px;color:#7e7e7e;letter-spacing:0.500px;">切换终端</div>
<div class="k" style="left:1127.2px;top:694px;width:28.59999999999991px">Ctrl</div>
<div class="t g" style="left:1158.7px;top:692.9px;font-size:13px;line-height:22px;color:#b0b0b0;">+</div>
<div class="k" style="left:1169.2px;top:694px;width:13.599999999999909px">`</div>
<div class="t g" style="left:1050.7px;top:727.8px;font-size:13px;line-height:22px;color:#7e7e7e;letter-spacing:0.708px;">打开“设置”</div>
<div class="k" style="left:1127.2px;top:729px;width:28.59999999999991px">Ctrl</div>
<div class="t g" style="left:1158.7px;top:727.9px;font-size:13px;line-height:22px;color:#b0b0b0;">+</div>
<div class="k" style="left:1169.2px;top:729px;width:13.599999999999909px">,</div>
<div class="r" style="left:0px;top:1010px;width:1920px;height:19px;background:#181818;border-top:1px solid #2b2b2b;box-sizing:border-box"></div>
<div class="r" style="left:0px;top:1011px;width:34px;height:18px;background:#0078d4;"></div>
<svg class="ic" style="left:9.8px;top:1013.9px;color:#fff" width="14.5" height="14.5" viewBox="0 0 16 16"><path fill="currentColor" stroke="currentColor" stroke-width="0.25" fill-rule="evenodd" d="M12.904 9.570L8.928 5.596l3.976-3.976-.619-.620L8 5.286v.619l4.285 4.285.620-.619zM3 5.620l4.072 4.050L3 13.744l.619.619L8 9.980v-.620L3.619 5 3 5.620z"/></svg>
<svg class="ic" style="left:41.5px;top:1014px;color:#cccccc" width="14" height="14" viewBox="0 0 16 16"><path d="M15 1.300C10.200 1.300 6.200 4 3.700 9.200l4 4C12.600 10.500 15 6.500 15 1.300zM5.700 5.300H1V9l6 5.700h4.200v-4.200M1 12v2.700h3.300" stroke-linejoin="round"/><circle cx="9.600" cy="6.500" r="1.100" fill="currentColor"/></svg>
<svg class="ic" style="left:55px;top:1014px;color:#cccccc" width="14" height="14" viewBox="0 0 16 16"><g transform="rotate(45 8 8)" stroke-width="1.200"><rect x="5.400" y="-.800" width="5.200" height="5" rx="2"/><rect x="4.900" y="4.200" width="6.200" height="6" rx="2.200"/><path d="M8 10.200V16.500"/></g></svg>
<div class="t " style="left:74px;top:1011.8px;font-size:12px;line-height:20px;color:#cccccc;letter-spacing:-0.299px;">Launchpad</div>
<div class="t " style="left:147.5px;top:1011.8px;font-size:12px;line-height:20px;color:#cccccc;letter-spacing:-0.195px;">调试器: 离线</div>
<div class="t " style="left:228.4px;top:1011.8px;font-size:12px;line-height:20px;color:#cccccc;">目标板：</div>
<div class="t " style="left:280.3px;top:1011.8px;font-size:12px;line-height:20px;color:#cccccc;">离线</div>
<div class="t " style="left:308.6px;top:1011.8px;font-size:12px;line-height:20px;color:#cccccc;">（单击检查连接状态）</div>
<svg class="ic" style="left:444px;top:1014px;color:#cccccc" width="14" height="14" viewBox="0 0 16 16"><path fill="currentColor" stroke="currentColor" stroke-width="0.25" fill-rule="evenodd" d="M14.500 2H7.710l-.850-.850L6.510 1h-5l-.500.500v11l.500.500H7v-1H1.990V6h4.490l.350-.150.860-.860H14v1.500l-.001.510h1.011V2.500L14.500 2zm-.510 2h-6.500l-.350.150-.860.860H2v-3h4.290l.850.850.360.150H14l-.010.990zM13 16h-1v-3H9v-1h3V9h1v3h3v1h-3v3z"/></svg>
<svg class="ic" style="left:474px;top:1014px;color:#cccccc" width="14" height="14" viewBox="0 0 16 16"><path fill="currentColor" stroke="currentColor" stroke-width="0.25" fill-rule="evenodd" d="M1.500 14h11l.480-.370 2.630-7-.480-.630H14V3.500l-.500-.500H7.710l-.860-.850L6.500 2h-5l-.500.500v11l.500.500zM2 3h4.290l.860.850.350.150H13v2H8.500l-.350.150-.860.850H3.500l-.470.340-1 3.080L2 3zm10.130 10H2.190l1.670-5H7.500l.350-.150.860-.850h5.790l-2.370 6z"/></svg>
<svg class="ic" style="left:504px;top:1014px;color:#cccccc" width="14" height="14" viewBox="0 0 16 16"><path d="M6.74 2.75 6.73 0.71 9.27 0.71 9.26 2.75 10.82 3.40 12.26 1.95 14.05 3.74 12.60 5.18 13.25 6.74 15.29 6.73 15.29 9.27 13.25 9.26 12.60 10.82 14.05 12.26 12.26 14.05 10.82 12.60 9.26 13.25 9.27 15.29 6.73 15.29 6.74 13.25 5.18 12.60 3.74 14.05 1.95 12.26 3.40 10.82 2.75 9.26 0.71 9.27 0.71 6.73 2.75 6.74 3.40 5.18 1.95 3.74 3.74 1.95 5.18 3.40z" stroke-linejoin="round"/><circle cx="8" cy="8" r="1.9"/></svg>
<svg class="ic" style="left:534px;top:1014px;color:#cccccc" width="14" height="14" viewBox="0 0 16 16"><path fill="currentColor" stroke="currentColor" stroke-width="0.25" fill-rule="evenodd" d="M10 3h3v1h-1v9l-1 1H4l-1-1V4H2V3h3V2a1 1 0 0 1 1-1h3a1 1 0 0 1 1 1v1zM9 2H6v1h3V2zM4 13h7V4H4v9zm2-8H5v7h1V5zm1 0h1v7H7V5zm2 0h1v7H9V5z"/></svg>
<svg class="ic" style="left:564px;top:1014px;color:#cccccc" width="14" height="14" viewBox="0 0 16 16"><path d="M10.8 1.4a4 4 0 0 1 1.6.3L10 4.1l.4 1.9 1.900.400 2.400-2.400a4 4 0 0 1-5.300 5.100L3.600 14.700a1.450 1.450 0 0 1-2.100-2.100l5.600-5.700a4 4 0 0 1 3.700-5.500z" stroke-linejoin="round"/></svg>
<svg class="ic" style="left:594px;top:1014px;color:#cccccc" width="14" height="14" viewBox="0 0 16 16"><path d="M11.2 .9a3.700 3.700 0 0 1 1.500.300L10.500 3.400l.400 1.700 1.700.400 2.200-2.200a3.700 3.700 0 0 1-4.900 4.700L3.400 14.700a1.300 1.300 0 0 1-1.900-1.900l6.300-6.500A3.700 3.700 0 0 1 11.200.900z" stroke-linejoin="round"/><ellipse cx="3.400" cy="4.600" rx="3" ry="1.250" transform="rotate(45 3.400 4.600)"/><path d="M9.300 9.200l4.800 4.800-1.300 1.300-4.700-4.700M5.600 6.800 7 8.200"/></svg>
<svg class="ic" style="left:624px;top:1014px;color:#cccccc" width="14" height="14" viewBox="0 0 16 16"><path fill="currentColor" stroke="currentColor" stroke-width="0.25" fill-rule="evenodd" d="M8 1a7 7 0 1 1-7 7 7.010 7.010 0 0 1 7-7zM2 8c0 1.418.504 2.790 1.423 3.870l8.447-8.447A5.993 5.993 0 0 0 2 8zm12 0c0-1.418-.504-2.790-1.423-3.870L4.130 12.577A5.993 5.993 0 0 0 14 8z"/></svg>
<svg class="ic" style="left:654px;top:1014px;color:#cccccc" width="14" height="14" viewBox="0 0 16 16"><path d="M8.100 1.200C8.300 3.300 10 4.500 11.100 6c.400-.500.600-1.100.600-1.700 1.300 1.600 1.900 3.600 1.900 5.500a5.300 5.300 0 0 1-5.300 5.200A5.200 5.200 0 0 1 3 9.800c0-3.300 3.600-5.200 5.100-8.600z" stroke-linejoin="round"/><path d="M8.200 14.900c-1.400 0-2.200-1-2.200-2 0-1.600 1.400-2.400 2-4.100 1.200 1.400 2.400 2.400 2.400 4.100 0 1-.800 2-2.200 2z" stroke-linejoin="round"/></svg>
<svg class="ic" style="left:684px;top:1014px;color:#cccccc" width="14" height="14" viewBox="0 0 16 16"><path d="M7 3.500h8.500M7 6.500h8.500M7 9.500h8.500M7 12.500h8.500" stroke-width="1.250"/><path d="M1.700 3.300l1.200 1.200 2.200-2.500M1.700 6.300l1.200 1.200 2.200-2.500M1.700 9.300l1.200 1.200 2.200-2.500M1.700 12.300l1.200 1.200 2.200-2.500"/></svg>
<svg class="ic" style="left:714px;top:1014px;color:#cccccc" width="14" height="14" viewBox="0 0 24 24"><path fill="currentColor" stroke="currentColor" stroke-width=".35" fill-rule="evenodd" d="M10.940 13.500l-1.320 1.320a3.730 3.730 0 0 0-7.240 0L1.060 13.500 0 14.560l1.720 1.720-.220.220V18H0v1.500h1.500v.080c.077.489.214.966.410 1.420L0 22.940 1.060 24l1.650-1.650A4.308 4.308 0 0 0 6 24a4.310 4.310 0 0 0 3.290-1.650L10.940 24 12 22.940 10.090 21c.198-.464.336-.951.410-1.450v-.100H12V18h-1.500v-1.500l-.220-.220L12 14.560l-1.060-1.060zM6 13.500a2.250 2.250 0 0 1 2.250 2.250h-4.500A2.250 2.250 0 0 1 6 13.500zm3 6a3.330 3.330 0 0 1-3 3 3.330 3.330 0 0 1-3-3v-2.250h6v2.250zm14.760-9.900v1.260L13.500 17.370V15.600l8.500-5.370L9 2v9.460a5.070 5.070 0 0 0-1.500-.720V.630L8.640 0l15.120 9.600z"/></svg>
<svg class="ic" style="left:744px;top:1014px;color:#cccccc" width="14" height="14" viewBox="0 0 16 16"><path d="M14.500 8V2.500h-13v11H8.500M1.500 5.200h13"/><g stroke-width="1.05"><circle cx="7.7" cy="9.4" r="1.0"/><path d="M8.70 9.40L9.90 9.40M8.41 10.11L9.26 10.96M7.70 10.40L7.70 11.60M6.99 10.11L6.14 10.96M6.70 9.40L5.50 9.40M6.99 8.69L6.14 7.84M7.70 8.40L7.70 7.20M8.41 8.69L9.26 7.84"/><circle cx="12.8" cy="12.4" r="0.9"/><path d="M13.70 12.40L14.80 12.40M13.44 13.04L14.21 13.81M12.80 13.30L12.80 14.40M12.16 13.04L11.39 13.81M11.90 12.40L10.80 12.40M12.16 11.76L11.39 10.99M12.80 11.50L12.80 10.40M13.44 11.76L14.21 10.99"/></g></svg>
<svg class="ic" style="left:774px;top:1014px;color:#cccccc" width="14" height="14" viewBox="0 0 16 16"><path d="M8 1.300 14.800 5.200 8 9.100 1.200 5.200zM1.500 8 8 11.700 14.500 8M1.500 10.800 8 14.500 14.500 10.800" stroke-linejoin="round"/></svg>
<svg class="ic" style="left:804px;top:1014px;color:#cccccc" width="14" height="14" viewBox="0 0 16 16"><path fill="currentColor" stroke="currentColor" stroke-width="0.25" fill-rule="evenodd" d="M1.500 14H15v-1H2V0H1v13.500l.500.500zM3 11.500v-8l.500-.500h2l.500.500v8l-.500.500h-2l-.500-.500zm2-.500V4H4v7h1zm6-9.500v10l.500.500h2l.500-.500v-10l-.500-.500h-2l-.500.500zm2 .500v9h-1V2h1zm-6 9.500v-6l.500-.500h2l.500.500v6l-.500.500h-2l-.500-.500zm2-.500V6H8v5h1z"/></svg>
<svg class="ic" style="left:834px;top:1014px;color:#cccccc" width="14" height="14" viewBox="0 0 16 16"><path d="M6.500 12H1.700a1 1 0 0 1-1-1V3.200a1 1 0 0 1 1-1h12.300a1 1 0 0 1 1 1V7.500" stroke-width="1.150"/><path d="M8.200 6.300 15.200 11.700 11.400 12.300 9.200 15.400z" stroke-linejoin="round"/></svg>
<svg class="ic" style="left:864px;top:1014px;color:#cccccc" width="14" height="14" viewBox="0 0 16 16"><rect x="1.500" y="1.500" width="13" height="13" rx="1.300" stroke-width="1.150"/><path d="M4 5.300 7.300 8.300 4 11.300M8.300 11.400h4.200" stroke-width="1.150"/></svg>
<svg class="ic" style="left:894px;top:1014px;color:#cccccc" width="14" height="14" viewBox="0 0 16 16"><path fill="currentColor" stroke="currentColor" stroke-width="0.25" fill-rule="evenodd" d="M8.600 1c1.600.100 3.100.900 4.200 2 1.300 1.400 2 3.100 2 5.100 0 1.600-.600 3.100-1.600 4.400-1 1.200-2.400 2.100-4 2.400-1.600.300-3.200.100-4.600-.700-1.400-.800-2.500-2-3.100-3.500C.900 9.200.800 7.500 1.300 6c.500-1.600 1.400-2.900 2.800-3.800C5.400 1.300 7 .900 8.600 1zm.500 12.900c1.300-.300 2.500-1 3.400-2.100.800-1.100 1.300-2.400 1.200-3.800 0-1.600-.600-3.200-1.700-4.300-1-1-2.200-1.600-3.600-1.700-1.300-.100-2.700.200-3.800 1-1.100.800-1.900 1.900-2.300 3.300-.400 1.300-.400 2.700.200 4 .600 1.300 1.500 2.300 2.700 3 1.200.700 2.600.900 3.900.600zM7.900 7.500L10.300 5l.700.700-2.400 2.500 2.400 2.500-.700.700-2.400-2.500-2.400 2.500-.700-.700 2.400-2.500-2.400-2.500.700-.700 2.400 2.500z"/></svg>
<div class="t " style="left:911.2px;top:1011.8px;font-size:12px;line-height:20px;color:#cccccc;">0</div>
<svg class="ic" style="left:921px;top:1014px;color:#cccccc" width="14" height="14" viewBox="0 0 16 16"><path fill="currentColor" stroke="currentColor" stroke-width="0.25" fill-rule="evenodd" d="M7.560 1h.880l6.540 12.260-.440.740H1.440L1 13.260 7.560 1zM8 2.280L2.280 13H13.700L8 2.280zM8.625 12v-1h-1.250v1h1.250zm-1.250-2V6h1.250v4h-1.250z"/></svg>
<div class="t " style="left:938px;top:1011.8px;font-size:12px;line-height:20px;color:#cccccc;">0</div>
<div class="r" style="left:736px;top:1001px;width:33px;height:40px;box-sizing:border-box;border:3px solid #ed1c24"></div>
<svg class="ic" style="left:1730.2px;top:1014.3px;color:#cccccc" width="14.3" height="14.3" viewBox="0 0 16 16"><circle cx="5.300" cy="4.700" r="2.500" stroke-width="1.500"/><circle cx="10.700" cy="4.700" r="2.500" stroke-width="1.500"/><path d="M2.800 6.300C1.300 7.300.800 8.800.800 10.600 2.300 13 5 14.300 8 14.300s5.700-1.300 7.200-3.700c0-1.800-.500-3.300-2-4.300" stroke-width="1.600" stroke-linecap="round"/><path d="M4.300 8.200h7.400" stroke-width="1.300"/><path d="M6.300 9.500v2.600M9.700 9.500v2.600" stroke-width="1.500"/></svg>
<svg class="ic" style="left:1760.3px;top:1014.2px;color:#cccccc" width="14" height="14" viewBox="0 0 16 16"><path d="M4.21 11.82A5.9 5.9 0 1 1 11.79 11.82M5.88 10.33A3.7 3.7 0 1 1 10.12 10.33" stroke-width="1.150"/><path d="M8 7.300V15.300" stroke-width="1.900"/><circle cx="8" cy="7.300" r="1.300" fill="currentColor" stroke="none"/></svg>
<div class="t " style="left:1778px;top:1011.8px;font-size:12px;line-height:20px;color:#cccccc;letter-spacing:-0.409px;">Go Live</div>
<div class="t " style="left:1832.7px;top:1011.8px;font-size:12px;line-height:20px;color:#cccccc;letter-spacing:-0.341px;">Analysis</div>
<svg class="ic" style="left:1891px;top:1014px;color:#cccccc" width="14" height="14" viewBox="0 0 16 16"><path fill="currentColor" stroke="currentColor" stroke-width="0.25" fill-rule="evenodd" d="M13.377 10.573a7.630 7.630 0 0 1-.383-2.380V6.195a5.115 5.115 0 0 0-1.268-3.446 5.138 5.138 0 0 0-3.242-1.722c-.694-.072-1.400 0-2.070.227-.670.215-1.280.574-1.794 1.053a4.923 4.923 0 0 0-1.208 1.675 5.067 5.067 0 0 0-.431 2.022v2.200a7.610 7.610 0 0 1-.383 2.370L2 12.343l.479.658h3.505c0 .526.215 1.040.586 1.412.370.370.885.586 1.412.586.526 0 1.040-.215 1.411-.586s.587-.886.587-1.412h3.505l.478-.658-.586-1.770zm-4.690 3.147a.997.997 0 0 1-.705.299.997.997 0 0 1-.706-.300.997.997 0 0 1-.300-.705h1.999a.939.939 0 0 1-.287.706zm-5.515-1.710l.371-1.114a8.633 8.633 0 0 0 .443-2.691V6.004c0-.563.120-1.113.347-1.616.227-.514.550-.969.969-1.340.419-.382.910-.670 1.436-.837.538-.180 1.100-.240 1.650-.180a4.147 4.147 0 0 1 2.597 1.400 4.133 4.133 0 0 1 1.004 2.776v2.010c0 .909.144 1.818.443 2.691l.371 1.113h-9.630v-.012z"/></svg>
</body></html>
